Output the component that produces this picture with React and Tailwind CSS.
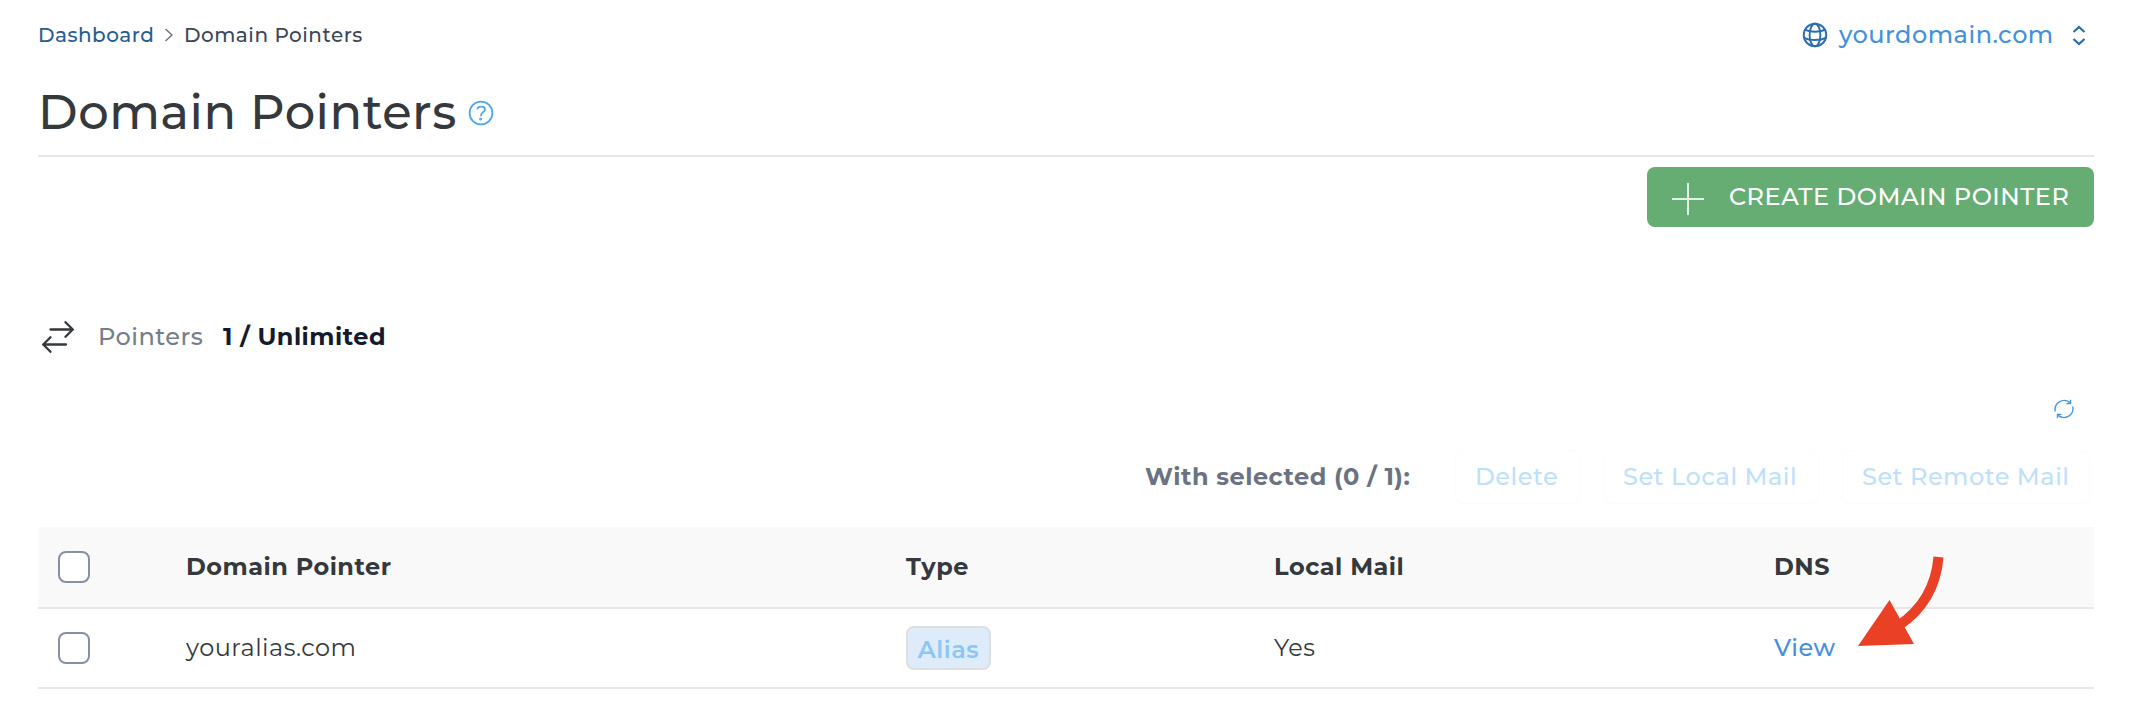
import React from 'react';

const GlobeIcon = () => (
  <svg className="w-[26px] h-[26px]" viewBox="0 0 26 26" fill="none" stroke="#2b6cb0" strokeWidth="1.9">
    <circle cx="13" cy="13" r="11.3" />
    <ellipse cx="13" cy="13" rx="5.4" ry="11.3" />
    <path d="M3.2 7.8C8.5 10.3 17.5 10.3 22.8 7.8M1.8 15.6C7.5 18.8 18.5 18.8 24.2 15.6" />
  </svg>
);

const HelpIcon = () => (
  <svg className="w-[26px] h-[26px]" viewBox="0 0 26 26" fill="none" stroke="#4fa5f0" strokeWidth="1.8" strokeLinecap="round">
    <circle cx="13" cy="13" r="11.4" />
    <path d="M9.4 8.6C10.4 6.2 17 5.6 17 9.4C17 12.2 13 11.8 13 15.4" />
    <circle cx="12.6" cy="19" r="0.6" />
  </svg>
);

const SwapIcon = () => (
  <svg className="w-8 h-8" viewBox="0 0 32 32" fill="none" stroke="#35393d" strokeWidth="2.3" strokeLinecap="round" strokeLinejoin="round">
    <path d="M8.500 8.500H30.500M23.500 1.2L30.800 8.500L23.500 15.800M24 23.500H1.500M8.500 16.2L1.2 23.500L8.500 30.800" />
  </svg>
);

const RefreshIcon = () => (
  <svg className="w-5 h-5" viewBox="0 0 20 20" fill="none" stroke="#4299e1" strokeWidth="1.4">
    <path d="M1.3 12.500A9 9 0 0 1 15.8 3.600M16.500 0.8V4.600H12.500M18.700 7.500A9 9 0 0 1 4.2 16.400M3.500 19.2V15.4H7.500" />
  </svg>
);

const Checkbox = () => (
  <span role="checkbox" aria-checked="false" className="block w-8 h-8 rounded-[8px] border-2 border-[#8690a3] bg-white" />
);

const bulkActions = [
  { label: 'Delete', box: 'w-[125px]' },
  { label: 'Set Local Mail', box: 'w-[216px]' },
  { label: 'Set Remote Mail', box: 'w-[248px]' },
];

const App = () => {
  return (
    <div className="w-[2130px] h-[712px] bg-white overflow-hidden pl-[38px] pr-9 font-['Montserrat','Inter',sans-serif] text-2xl tracking-[0.5px] text-[#35393d] whitespace-nowrap">
      {/* Breadcrumbs and domain picker */}
      <header className="h-[70px] flex items-center justify-between">
        <nav className="flex items-center text-xl leading-none font-medium">
          <a className="w-[126px] text-[#2a5d8f]">Dashboard</a>
          <svg className="w-[10px] h-[14px] mr-[10px]" viewBox="0 0 10 14" fill="none" stroke="#6b7280" strokeWidth="1.4">
            <path d="M1.5 1L8 7L1.5 13" />
          </svg>
          <span className="text-[#3f4656]">Domain Pointers</span>
        </nav>
        <button className="w-[292px] flex items-center text-[#4490dd] font-medium">
          <GlobeIcon />
          <span className="w-[244px] pl-[11px] text-left">yourdomain.com</span>
          <svg className="w-[14px] h-[22px]" viewBox="0 0 14 22" fill="none" stroke="#2b6cb0" strokeWidth="2.2">
            <path d="M1.5 8L7 3L12.500 8M1.5 15L7 20L12.500 15" />
          </svg>
        </button>
      </header>

      <div className="h-[87px] flex items-center border-b-2 border-[#e5e7eb]">
        <h1 className="w-[430px] pb-[2px] text-5xl leading-none font-medium">Domain Pointers</h1>
        <HelpIcon />
      </div>

      <div className="flex justify-end pt-[10px]">
        <button className="w-[447px] h-[60px] flex items-center rounded-[8px] bg-[#65ad72] text-white pl-[25px] font-medium">
          <svg className="w-8 h-8 mt-1" viewBox="0 0 32 32" stroke="#e3f2e5" strokeWidth="2">
            <path d="M0 16H32M16 0V32" />
          </svg>
          <span className="ml-[25px]">CREATE DOMAIN POINTER</span>
        </button>
      </div>

      <div className="h-8 mt-[94px] pl-1 flex items-center">
        <SwapIcon />
        <span className="w-[125px] ml-6 text-[#757d8c] font-medium">Pointers</span>
        <span className="font-bold text-[#141a2a]">1 / Unlimited</span>
      </div>

      <div className="flex justify-end mt-[46px] pr-5">
        <RefreshIcon />
      </div>

      {/* Bulk actions */}
      <div className="h-[54px] mt-[31px] mb-[23px] pr-1 flex items-center justify-end gap-[23px]">
        <span className="w-[287px] font-bold text-[#6b7280]">With selected (0 / 1):</span>
        {bulkActions.map(({ label, box }) => (
          <button key={label} disabled className={`${box} h-[54px] pl-[19px] text-left rounded-[8px] border border-[#fcfcfc] text-[#bee0fa] font-medium`}>
            {label}
          </button>
        ))}
      </div>

      <div className="relative">
        <div className="h-[82px] grid grid-cols-[148px_720px_368px_500px_1fr] items-center bg-[#f9f9f9] border-b-2 border-[#e5e7eb] font-bold">
          <div className="pl-5"><Checkbox /></div>
          <div>Domain Pointer</div>
          <div>Type</div>
          <div>Local Mail</div>
          <div>DNS</div>
        </div>
        <div className="h-[80px] grid grid-cols-[148px_720px_368px_500px_1fr] items-center border-b-2 border-[#e5e7eb]">
          <div className="pl-5"><Checkbox /></div>
          <div>youralias.com</div>
          <div>
            <span className="w-[85px] h-11 flex items-center justify-center rounded-[8px] border-2 border-[#dedede] bg-[#deecfa] text-[#8bc6f5] font-semibold pt-1">Alias</span>
          </div>
          <div>Yes</div>
          <a className="font-medium text-[#4490dd]">View</a>
        </div>

        {/* Pointer arrow aimed at the DNS link */}
        <svg className="absolute left-[1816px] top-[26px] w-[92px] h-[96px]" viewBox="0 0 92 96" fill="none">
          <path d="M84.500 4C82 34 68 57 44 73" stroke="#ea4025" strokeWidth="10" />
          <path d="M4 93L35.500 47L60 91Z" fill="#ea4025" />
        </svg>
      </div>
    </div>
  );
};

export default App;
